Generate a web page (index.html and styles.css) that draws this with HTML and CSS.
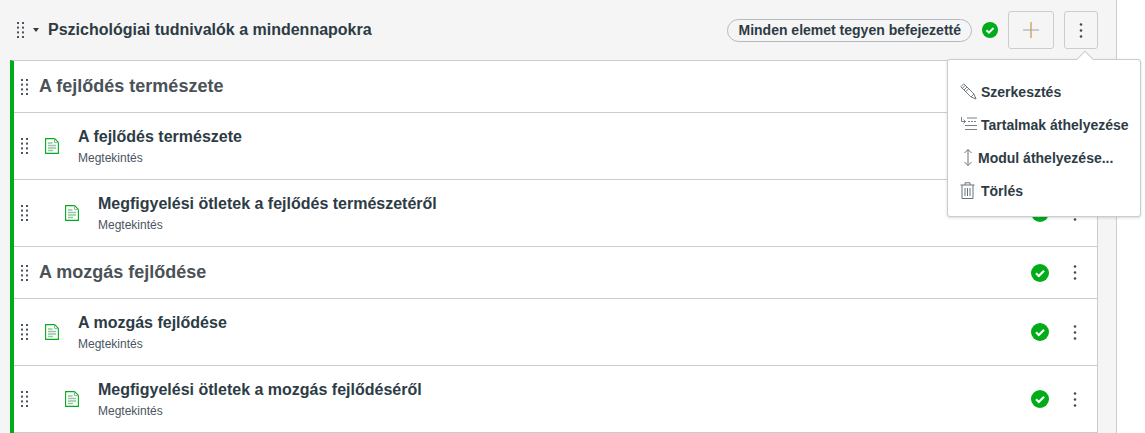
FILE: index.html
```html
<!DOCTYPE html>
<html lang="hu">
<head>
<meta charset="utf-8">
<title>Modulok</title>
<link rel="stylesheet" href="styles.css">
</head>
<body>
<svg class="defs" width="0" height="0" aria-hidden="true">
  <defs>
    <symbol id="grip" viewBox="0 0 7 16">
      <g fill="#4a5560">
        <rect x="0" y="0" width="2" height="2"/><rect x="5" y="0" width="2" height="2"/>
        <rect x="0" y="4.6" width="2" height="2"/><rect x="5" y="4.6" width="2" height="2"/>
        <rect x="0" y="9.4" width="2" height="2"/><rect x="5" y="9.4" width="2" height="2"/>
        <rect x="0" y="14" width="2" height="2"/><rect x="5" y="14" width="2" height="2"/>
      </g>
    </symbol>
    <symbol id="check" viewBox="0 0 18 18">
      <circle cx="9" cy="9" r="9" fill="#00ac18"/>
      <path d="M5 9.3l2.8 2.7L13 6.8" fill="none" stroke="#fff" stroke-width="2.2"/>
    </symbol>
    <symbol id="kebab" viewBox="0 0 4 15">
      <g fill="#3f4d58"><circle cx="2" cy="1.500" r="1.300"/><circle cx="2" cy="7.500" r="1.300"/><circle cx="2" cy="13.500" r="1.300"/></g>
    </symbol>
    <symbol id="doc" viewBox="0 0 14 16">
      <path d="M.6.6h9l3.800 3.800v11H.6z" fill="#fff" stroke="#00ac18" stroke-width="1.100"/>
      <path d="M9.500.6v4h4" fill="none" stroke="#7fbf90" stroke-width="1"/>
      <path d="M3 5h4.500M3 7.500h8M3 10h8M3 12.500h5" stroke="#8fc7a0" stroke-width="1.400"/>
    </symbol>
  </defs>
</svg>
<main class="module">
  <header class="module-head">
    <svg class="grip"><use href="#grip"/></svg>
    <span class="caret"></span>
    <h2 class="module-title">Pszichológiai tudnivalók a mindennapokra</h2>
    <div class="module-actions">
      <span class="pill">Minden elemet tegyen befejezetté</span>
      <svg class="check"><use href="#check"/></svg>
      <button class="btn btn-add" aria-label="Hozzáadás">
        <svg width="16" height="16" viewBox="0 0 16 16"><path d="M0 8h16" stroke="#a9b3bb" stroke-width="1.200"/><path d="M8 0v16" stroke="#c9973f" stroke-width="1.200"/></svg>
      </button>
      <button class="btn btn-more" aria-label="Beállítások">
        <svg class="kebab"><use href="#kebab"/></svg>
      </button>
    </div>
  </header>

  <ul class="items">
    <li class="row row-sub">
      <svg class="grip"><use href="#grip"/></svg>
      <h3 class="sub-title">A fejlődés természete</h3>
    </li>
    <li class="row row-item">
      <svg class="grip"><use href="#grip"/></svg>
      <svg class="doc"><use href="#doc"/></svg>
      <div class="item-text"><a class="item-title">A fejlődés természete</a><span class="item-meta">Megtekintés</span></div>
    </li>
    <li class="row row-item row-indent">
      <svg class="grip"><use href="#grip"/></svg>
      <svg class="doc"><use href="#doc"/></svg>
      <div class="item-text"><a class="item-title">Megfigyelési ötletek a fejlődés természetéről</a><span class="item-meta">Megtekintés</span></div>
      <svg class="check"><use href="#check"/></svg>
      <svg class="kebab"><use href="#kebab"/></svg>
    </li>
    <li class="row row-sub">
      <svg class="grip"><use href="#grip"/></svg>
      <h3 class="sub-title">A mozgás fejlődése</h3>
      <svg class="check"><use href="#check"/></svg>
      <svg class="kebab"><use href="#kebab"/></svg>
    </li>
    <li class="row row-item">
      <svg class="grip"><use href="#grip"/></svg>
      <svg class="doc"><use href="#doc"/></svg>
      <div class="item-text"><a class="item-title">A mozgás fejlődése</a><span class="item-meta">Megtekintés</span></div>
      <svg class="check"><use href="#check"/></svg>
      <svg class="kebab"><use href="#kebab"/></svg>
    </li>
    <li class="row row-item row-indent">
      <svg class="grip"><use href="#grip"/></svg>
      <svg class="doc"><use href="#doc"/></svg>
      <div class="item-text"><a class="item-title">Megfigyelési ötletek a mozgás fejlődéséről</a><span class="item-meta">Megtekintés</span></div>
      <svg class="check"><use href="#check"/></svg>
      <svg class="kebab"><use href="#kebab"/></svg>
    </li>
  </ul>

  <div class="menu">
    <span class="menu-arrow"></span>
    <a class="menu-item">
      <svg class="menu-icon" viewBox="0 0 17 17"><path d="M.8 3.800l3-3L14 11l2 5-5-2zM2.300 5.300l3-3M4 7l3-3M5.700 8.700l3-3M11 14l3-3M14.800 15.800l.5-1.500" fill="none" stroke="#66727b" stroke-width=".9"/></svg>
      <span>Szerkesztés</span>
    </a>
    <a class="menu-item">
      <svg class="menu-icon" viewBox="0 0 17 17"><path d="M1.500 1v4.500h4M3.500 3.500l2 2-2 2" fill="none" stroke="#66727b" stroke-width=".9"/><path d="M8 5.500h9" stroke="#66727b" stroke-width=".9" stroke-dasharray="2 1"/><path d="M7 2h10M5 9.500h12M5 13.500h12" stroke="#66727b" stroke-width=".9"/></svg>
      <span>Tartalmak áthelyezése</span>
    </a>
    <a class="menu-item menu-item-tight">
      <svg class="menu-icon" viewBox="0 0 17 17"><path d="M8 .5v16M4.500 4l3.500-3.500L11.500 4M4.500 13l3.500 3.500 3.500-3.500" fill="none" stroke="#66727b" stroke-width="1"/></svg>
      <span>Modul áthelyezése...</span>
    </a>
    <a class="menu-item">
      <svg class="menu-icon" viewBox="0 0 17 17"><path d="M.5 3h14M5 3V.800h5V3M2 3v13.500h11V3M5 6v8M7.500 6v8M10 6v8" fill="none" stroke="#66727b" stroke-width="1"/></svg>
      <span>Törlés</span>
    </a>
  </div>
</main>
</body>
</html>
```
FILE: styles.css
```css
* { box-sizing: border-box; }
html, body { margin: 0; padding: 0; }
body {
  width: 1145px;
  height: 433px;
  overflow: hidden;
  background: #fff;
  font-family: "Liberation Sans", Arial, sans-serif;
  color: #2d3b45;
}
.defs { position: absolute; }
.module {
  position: relative;
  width: 1117px;
  height: 433px;
  background: #f5f5f5;
  border-right: 1px solid #c7cdd1;
  padding-left: 10px;
  padding-right: 18px;
}
.module-head {
  display: flex;
  align-items: center;
  height: 60px;
  padding-left: 7px;
}
.grip { width: 7px; height: 16px; flex: none; }
.caret {
  width: 0; height: 0;
  margin-left: 9px;
  border-left: 3.500px solid transparent;
  border-right: 3.500px solid transparent;
  border-top: 4px solid #2d3b45;
}
.module-title {
  margin: 0 0 0 9px;
  font-size: 16px;
  font-weight: 700;
  line-height: 20px;
}
.module-actions {
  margin-left: auto;
  display: flex;
  align-items: center;
}
.pill {
  display: inline-flex;
  align-items: center;
  height: 23px;
  padding: 0 10px;
  border: 1px solid #b4bbc0;
  border-radius: 12px;
  font-size: 14px;
  font-weight: 700;
}
.check { width: 18px; height: 18px; flex: none; }
.module-actions .check { width: 16px; height: 16px; margin-left: 10px; }
.btn {
  display: flex;
  align-items: center;
  justify-content: center;
  height: 38px;
  background: #f5f5f5;
  border: 1px solid #c7cdd1;
  border-radius: 3px;
  padding: 0;
}
.btn-add { width: 46px; margin-left: 10px; }
.btn-more { width: 34px; margin-left: 10px; }
.kebab { width: 4px; height: 15px; flex: none; }
.items {
  list-style: none;
  margin: 0;
  padding: 0;
  background: #fff;
  border-left: 4px solid #00ac18;
  border-right: 1px solid #c7cdd1;
  border-top: 1px solid #c7cdd1;
}
.row {
  display: flex;
  align-items: center;
  padding-left: 7px;
  padding-right: 20px;
  border-bottom: 1px solid #c7cdd1;
}
.row-sub { height: 52px; }
.row-item { height: 67px; }
.row .check { margin-left: auto; margin-right: 24px; }
.sub-title {
  margin: 0 0 2px 11px;
  font-size: 18px;
  font-weight: 700;
  line-height: 24px;
  color: #4a5257;
}
.doc { width: 14px; height: 16px; flex: none; margin-left: 17px; }
.row-indent .doc { margin-left: 37px; }
.item-text {
  display: flex;
  flex-direction: column;
  margin-left: 19px;
}
.item-title {
  font-size: 16px;
  font-weight: 700;
  line-height: 20px;
}
.item-meta {
  margin-top: 3px;
  font-size: 12px;
  line-height: 16px;
  color: #4a5560;
}
.menu {
  position: absolute;
  left: 947px;
  top: 59px;
  width: 194px;
  height: 158px;
  padding-top: 15px;
  background: #fff;
  border: 1px solid #c7cdd1;
  border-radius: 3px;
  box-shadow: 0 1px 3px rgba(0, 0, 0, .15);
}
.menu-arrow {
  position: absolute;
  top: -7px;
  left: 131px;
  width: 12px;
  height: 12px;
  background: #fff;
  border-top: 1px solid #c7cdd1;
  border-left: 1px solid #c7cdd1;
  transform: rotate(45deg);
}
.menu-item {
  display: flex;
  align-items: center;
  gap: 4px;
  height: 33px;
  padding-left: 12px;
  font-size: 14px;
  font-weight: 700;
  white-space: nowrap;
}
.menu-item-tight { gap: 1px; }
.menu-icon { width: 17px; height: 17px; flex: none; }
```
